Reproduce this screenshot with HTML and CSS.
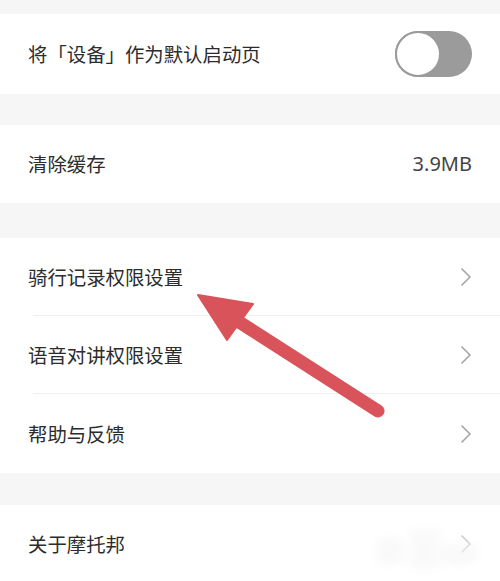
FILE: index.html
```html
<!DOCTYPE html>
<html lang="zh-CN">
<head>
<meta charset="utf-8">
<link rel="stylesheet" href="styles.css">
</head>
<body>
<div class="page">
  <section class="group g1">
    <div class="row h80">
      <span class="label">将「设备」作为默认启动页</span>
      <div class="toggle"><div class="knob"></div></div>
    </div>
  </section>
  <section class="group g2">
    <div class="row h78">
      <span class="label">清除缓存</span>
      <span class="value">3.9MB</span>
    </div>
  </section>
  <section class="group g3">
    <div class="row h77">
      <span class="label">骑行记录权限设置</span>
      <svg class="chev" width="10" height="18" viewBox="0 0 10 18"><polyline points="1,1 9,9 1,17" fill="none" stroke="#a3a3a3" stroke-width="1.6" stroke-linecap="round" stroke-linejoin="round"/></svg>
    </div>
    <div class="divider"></div>
    <div class="row h77">
      <span class="label">语音对讲权限设置</span>
      <svg class="chev" width="10" height="18" viewBox="0 0 10 18"><polyline points="1,1 9,9 1,17" fill="none" stroke="#a3a3a3" stroke-width="1.6" stroke-linecap="round" stroke-linejoin="round"/></svg>
    </div>
    <div class="divider"></div>
    <div class="row h79">
      <span class="label">帮助与反馈</span>
      <svg class="chev" width="10" height="18" viewBox="0 0 10 18"><polyline points="1,1 9,9 1,17" fill="none" stroke="#a3a3a3" stroke-width="1.6" stroke-linecap="round" stroke-linejoin="round"/></svg>
    </div>
  </section>
  <section class="group g4">
    <div class="row h78">
      <span class="label">关于摩托邦</span>
      <svg class="chev faint" width="10" height="18" viewBox="0 0 10 18"><polyline points="1,1 9,9 1,17" fill="none" stroke="#c8c8c8" stroke-width="1.6" stroke-linecap="round" stroke-linejoin="round"/></svg>
    </div>
  </section>
  <div class="watermark">
    <div class="wm a"></div>
    <div class="wm b"></div>
    <div class="wm c"></div>
  </div>
  <svg class="arrow" width="500" height="581" viewBox="0 0 500 581">
    <line x1="378" y1="411" x2="236" y2="320" stroke="#d9535a" stroke-width="13" stroke-linecap="round"/>
    <polygon points="198,295 253,304 227,340" fill="#d9535a" stroke="#d9535a" stroke-width="2" stroke-linejoin="round"/>
  </svg>
</div>
</body>
</html>
```

FILE: styles.css
```css
html, body {
  margin: 0;
  padding: 0;
  background: #f6f6f6;
}
.page {
  position: relative;
  width: 500px;
  height: 581px;
  overflow: hidden;
  font-family: "Noto Sans CJK SC", "Noto Sans", sans-serif;
}
.group {
  background: #ffffff;
  display: flex;
  flex-direction: column;
}
.g1 { margin-top: 14px; }
.g2 { margin-top: 31px; }
.g3 { margin-top: 35px; }
.g4 { margin-top: 32px; }
.row {
  display: flex;
  align-items: center;
  justify-content: space-between;
  padding: 0 28px 0 28px;
}
.h77 { height: 77px; }
.h78 { height: 78px; }
.h79 { height: 79px; }
.h80 { height: 80px; }
.label {
  font-size: 19.4px;
  color: #2c2c2c;
  line-height: 1;
}
.value {
  font-family: "Noto Sans", sans-serif;
  font-size: 20px;
  color: #444444;
  line-height: 1;
}
.divider {
  height: 1px;
  background: #f0f0f0;
  margin-left: 33px;
}
.toggle {
  width: 77px;
  height: 46px;
  border-radius: 23px;
  background: #9b9b9b;
  display: flex;
  align-items: center;
  box-sizing: border-box;
}
.knob {
  width: 46px;
  height: 46px;
  border-radius: 50%;
  background: #ffffff;
  border: 2px solid #9b9b9b;
  box-sizing: border-box;
}
.chev {
  display: block;
  margin-right: 1px;
}
.arrow {
  position: absolute;
  left: 0;
  top: 0;
  pointer-events: none;
}
.watermark {
  position: absolute;
  left: 372px;
  top: 525px;
  width: 110px;
  height: 48px;
  pointer-events: none;
}
.wm {
  position: absolute;
  background: #f6f6f6;
  filter: blur(4px);
  opacity: 0.6;
}
.wm.a { left: 4px; top: 12px; width: 28px; height: 28px; border-radius: 8px; }
.wm.b { left: 38px; top: 4px; width: 30px; height: 40px; }
.wm.c { left: 68px; top: 18px; width: 38px; height: 22px; border-radius: 10px; }
```
